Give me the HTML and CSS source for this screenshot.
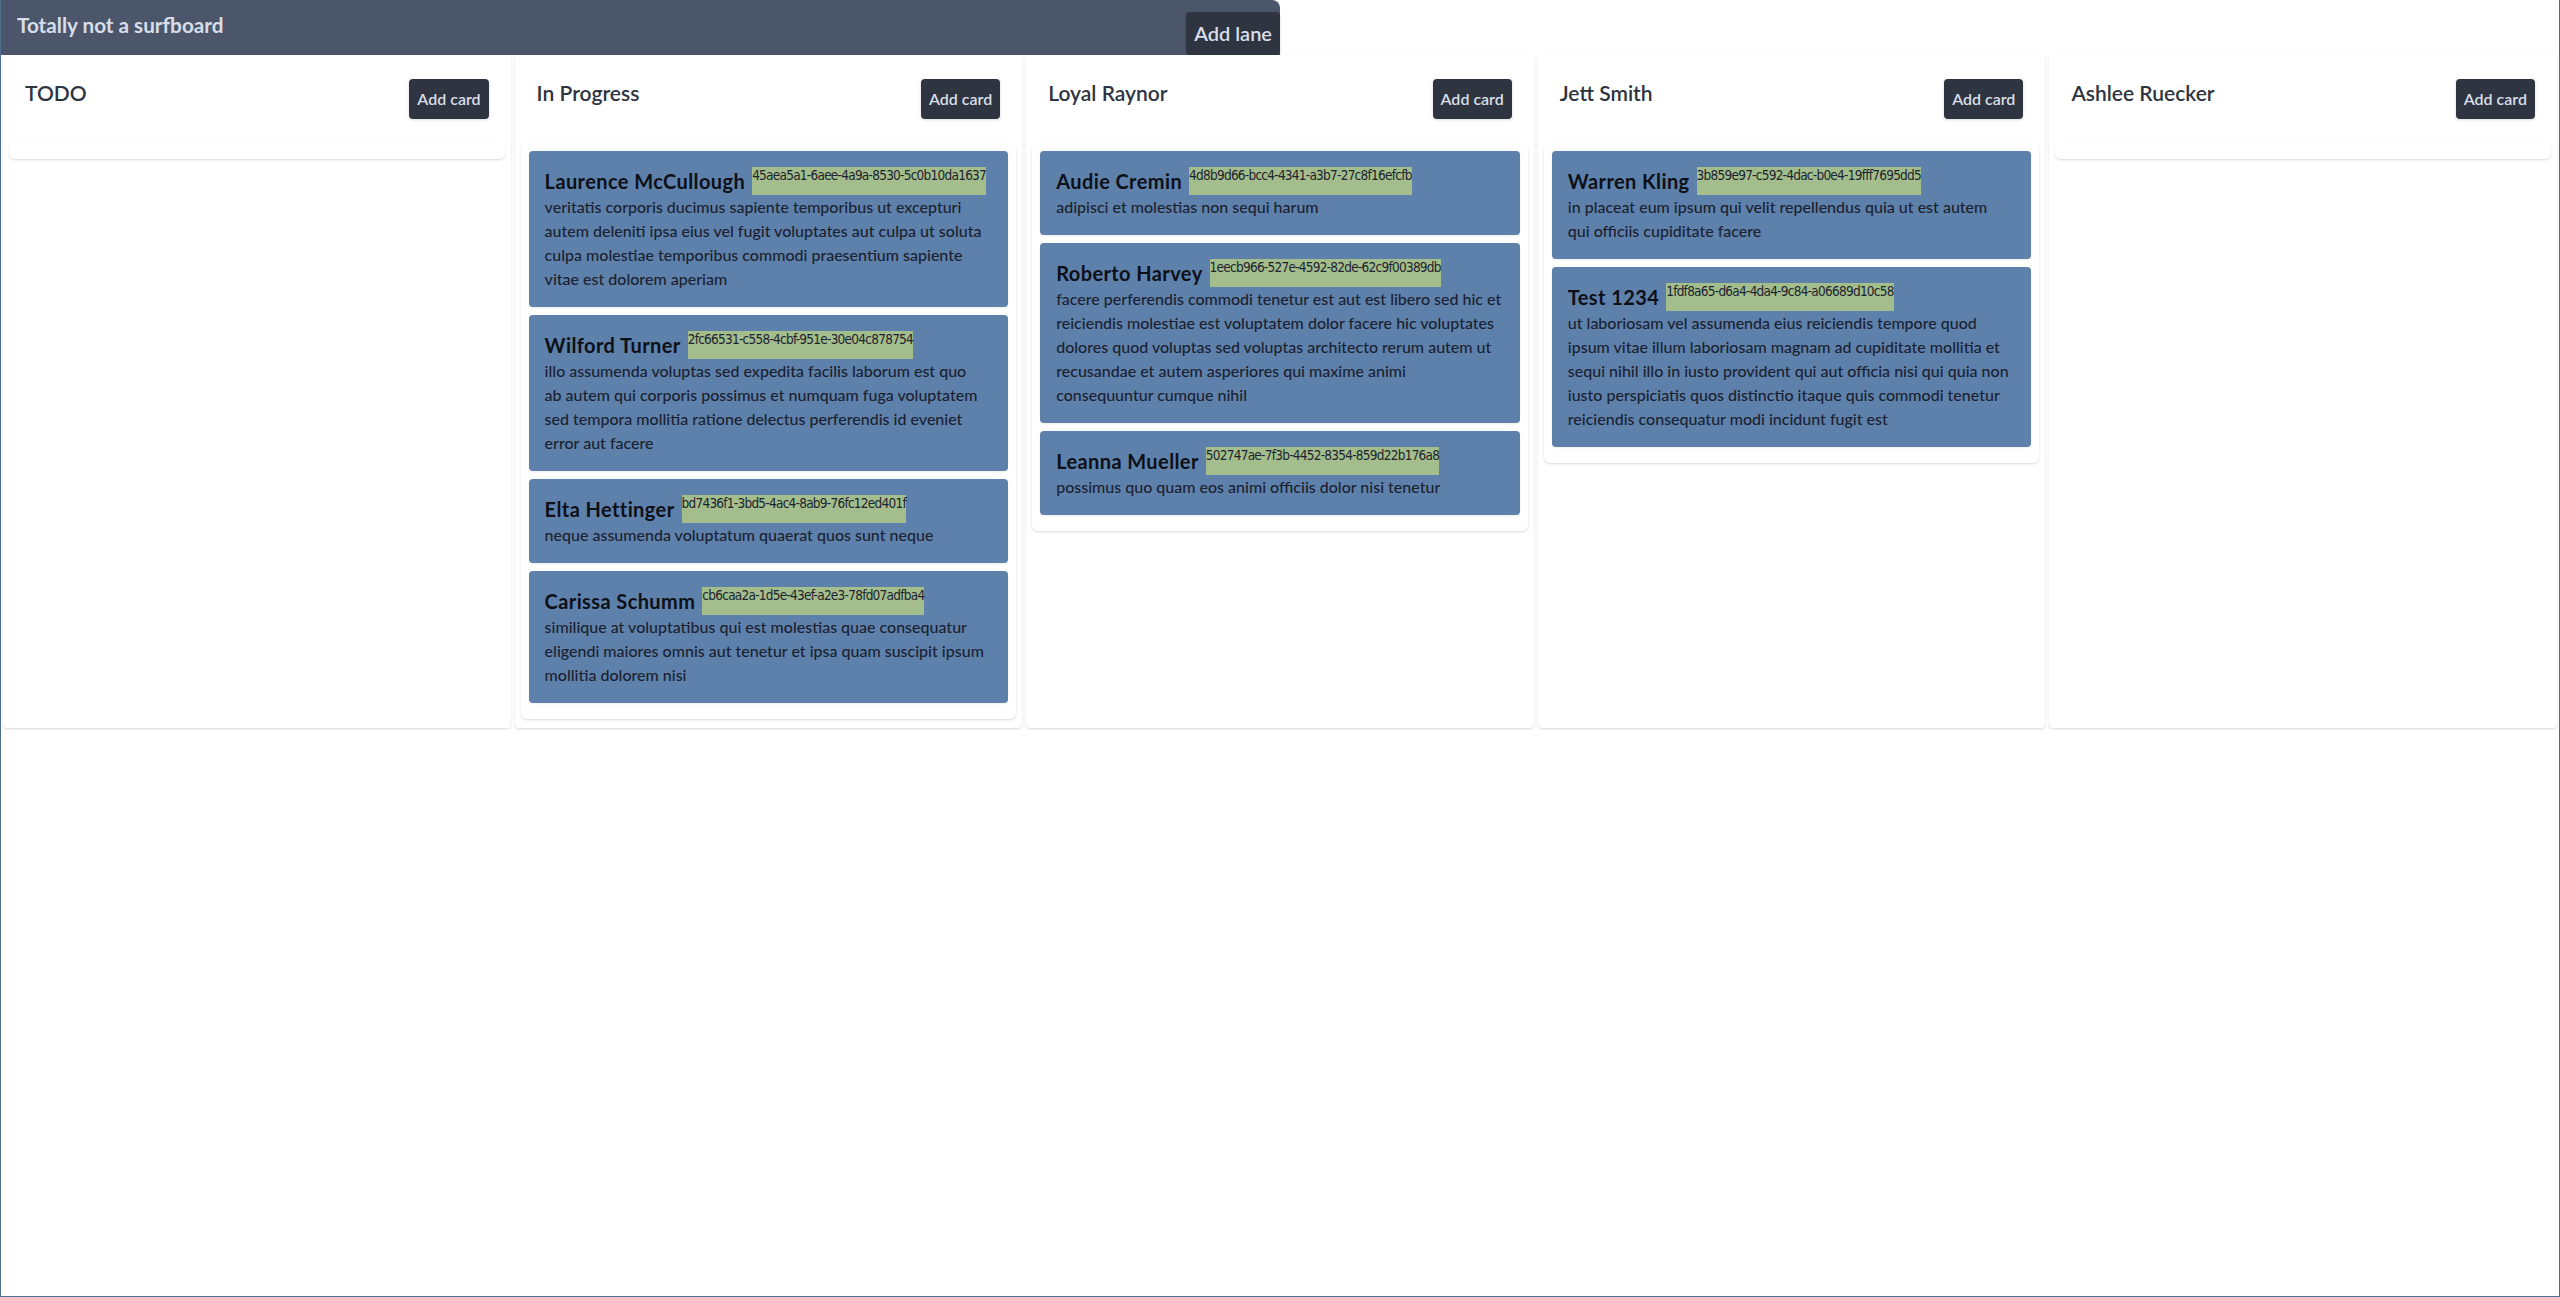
FILE: index.html
```html
<!DOCTYPE html>
<html lang="en">
<head>
<meta charset="utf-8">
<title>Totally not a surfboard</title>
<link rel="stylesheet" href="styles.css">
</head>
<body>
<div class="app">
  <header class="topbar">
    <h1 class="board-title">Totally not a surfboard</h1>
    <button class="btn btn-lane">Add lane</button>
  </header>
  <main class="lanes">
    <section class="lane">
      <div class="lane-head"><h2 class="lane-title">TODO</h2><button class="btn btn-card">Add card</button></div>
      <div class="cards"></div>
    </section>

    <section class="lane">
      <div class="lane-head"><h2 class="lane-title">In Progress</h2><button class="btn btn-card">Add card</button></div>
      <div class="cards">
        <article class="card">
          <div class="card-head"><h3 class="card-name">Laurence McCullough</h3><span class="card-id">45aea5a1-6aee-4a9a-8530-5c0b10da1637</span></div>
          <p class="card-body">veritatis corporis ducimus sapiente temporibus ut excepturi<br>autem deleniti ipsa eius vel fugit voluptates aut culpa ut soluta<br>culpa molestiae temporibus commodi praesentium sapiente<br>vitae est dolorem aperiam</p>
        </article>
        <article class="card">
          <div class="card-head"><h3 class="card-name">Wilford Turner</h3><span class="card-id">2fc66531-c558-4cbf-951e-30e04c878754</span></div>
          <p class="card-body">illo assumenda voluptas sed expedita facilis laborum est quo<br>ab autem qui corporis possimus et numquam fuga voluptatem<br>sed tempora mollitia ratione delectus perferendis id eveniet<br>error aut facere</p>
        </article>
        <article class="card">
          <div class="card-head"><h3 class="card-name">Elta Hettinger</h3><span class="card-id">bd7436f1-3bd5-4ac4-8ab9-76fc12ed401f</span></div>
          <p class="card-body">neque assumenda voluptatum quaerat quos sunt neque</p>
        </article>
        <article class="card">
          <div class="card-head"><h3 class="card-name">Carissa Schumm</h3><span class="card-id">cb6caa2a-1d5e-43ef-a2e3-78fd07adfba4</span></div>
          <p class="card-body">similique at voluptatibus qui est molestias quae consequatur<br>eligendi maiores omnis aut tenetur et ipsa quam suscipit ipsum<br>mollitia dolorem nisi</p>
        </article>
      </div>
    </section>

    <section class="lane">
      <div class="lane-head"><h2 class="lane-title">Loyal Raynor</h2><button class="btn btn-card">Add card</button></div>
      <div class="cards">
        <article class="card">
          <div class="card-head"><h3 class="card-name">Audie Cremin</h3><span class="card-id">4d8b9d66-bcc4-4341-a3b7-27c8f16efcfb</span></div>
          <p class="card-body">adipisci et molestias non sequi harum</p>
        </article>
        <article class="card">
          <div class="card-head"><h3 class="card-name">Roberto Harvey</h3><span class="card-id">1eecb966-527e-4592-82de-62c9f00389db</span></div>
          <p class="card-body">facere perferendis commodi tenetur est aut est libero sed hic et<br>reiciendis molestiae est voluptatem dolor facere hic voluptates<br>dolores quod voluptas sed voluptas architecto rerum autem ut<br>recusandae et autem asperiores qui maxime animi<br>consequuntur cumque nihil</p>
        </article>
        <article class="card">
          <div class="card-head"><h3 class="card-name">Leanna Mueller</h3><span class="card-id">502747ae-7f3b-4452-8354-859d22b176a8</span></div>
          <p class="card-body">possimus quo quam eos animi officiis dolor nisi tenetur</p>
        </article>
      </div>
    </section>

    <section class="lane">
      <div class="lane-head"><h2 class="lane-title">Jett Smith</h2><button class="btn btn-card">Add card</button></div>
      <div class="cards">
        <article class="card">
          <div class="card-head"><h3 class="card-name">Warren Kling</h3><span class="card-id">3b859e97-c592-4dac-b0e4-19fff7695dd5</span></div>
          <p class="card-body">in placeat eum ipsum qui velit repellendus quia ut est autem<br>qui officiis cupiditate facere</p>
        </article>
        <article class="card">
          <div class="card-head"><h3 class="card-name">Test 1234</h3><span class="card-id">1fdf8a65-d6a4-4da4-9c84-a06689d10c58</span></div>
          <p class="card-body">ut laboriosam vel assumenda eius reiciendis tempore quod<br>ipsum vitae illum laboriosam magnam ad cupiditate mollitia et<br>sequi nihil illo in iusto provident qui aut officia nisi qui quia non<br>iusto perspiciatis quos distinctio itaque quis commodi tenetur<br>reiciendis consequatur modi incidunt fugit est</p>
        </article>
      </div>
    </section>

    <section class="lane">
      <div class="lane-head"><h2 class="lane-title">Ashlee Ruecker</h2><button class="btn btn-card">Add card</button></div>
      <div class="cards"></div>
    </section>
  </main>
</div>
</body>
</html>
```

FILE: styles.css
```css
html, body {
  margin: 0;
  padding: 0;
  height: 100%;
}

body {
  font-family: Lato, "Noto Sans", sans-serif;
  background: #ffffff;
  color: #2e3440;
}

.app {
  box-sizing: border-box;
  height: 1297px;
  border-left: 1px solid #4f6d8f;
  border-right: 1px solid #4f6d8f;
  border-bottom: 1px solid #4f6d8f;
  display: flex;
  flex-direction: column;
}

.topbar {
  box-sizing: border-box;
  width: 1279px;
  height: 55px;
  flex: none;
  background: #4c566a;
  border-top-right-radius: 8px;
  padding-left: 16px;
  display: flex;
  justify-content: space-between;
  align-items: flex-start;
}

.board-title {
  margin: 0;
  padding-top: 11px;
  font-size: 20.7px;
  line-height: 28px;
  font-weight: 700;
  color: #d8dee9;
}

.btn {
  font-family: inherit;
  border: 0;
  background: #2e3440;
  color: #d8dee9;
  border-radius: 4px;
  cursor: pointer;
  box-shadow: 0 1px 3px rgba(0, 0, 0, 0.15);
}

.btn-lane {
  align-self: flex-end;
  font-size: 20px;
  line-height: 28px;
  font-weight: 600;
  padding: 7px 8px 8px;
}

.btn-card {
  font-size: 16px;
  line-height: 24px;
  font-weight: 600;
  padding: 8px;
}

.lanes {
  display: flex;
  align-items: stretch;
}

.lane {
  flex: 1 1 0;
  min-width: 0;
  margin: 0 2px;
  padding: 6px 6px 9px;
  background: #ffffff;
  border-radius: 4px;
  box-shadow: 0 1px 3px rgba(0, 0, 0, 0.1), 0 1px 2px rgba(0, 0, 0, 0.06);
}

.lane-head {
  display: flex;
  justify-content: space-between;
  align-items: flex-start;
  padding: 18px 16px 24px;
}

.lane-title {
  margin: 0;
  font-size: 21px;
  line-height: 28px;
  font-weight: 600;
  color: #2e3440;
}

.cards {
  background: #ffffff;
  border-radius: 6px;
  padding: 8px;
  display: flex;
  flex-direction: column;
  box-shadow: 0 1px 3px rgba(0, 0, 0, 0.1), 0 1px 2px rgba(0, 0, 0, 0.06);
}

.card {
  background: #5e81ac;
  border-radius: 4px;
  padding: 16px;
  margin-bottom: 8px;
  box-shadow: 0 1px 2px rgba(0, 0, 0, 0.08);
}

.card-head {
  display: flex;
  align-items: stretch;
  height: 28px;
}

.card-name {
  flex: none;
  margin: 0;
  font-size: 20px;
  letter-spacing: 0.4px;
  line-height: 28px;
  font-weight: 700;
  color: #0d1017;
  white-space: nowrap;
}

.card-id {
  flex: none;
  margin-left: 7px;
  background: #a3be8c;
  font-family: "DejaVu Sans Condensed", "DejaVu Sans", sans-serif;
  font-size: 13.5px;
  letter-spacing: -0.75px;
  line-height: 17px;
  color: #1d2330;
  white-space: nowrap;
}

.card-body {
  margin: 0;
  font-size: 16px;
  font-weight: 500;
  line-height: 24px;
  white-space: nowrap;
  color: #1b2130;
}
```
